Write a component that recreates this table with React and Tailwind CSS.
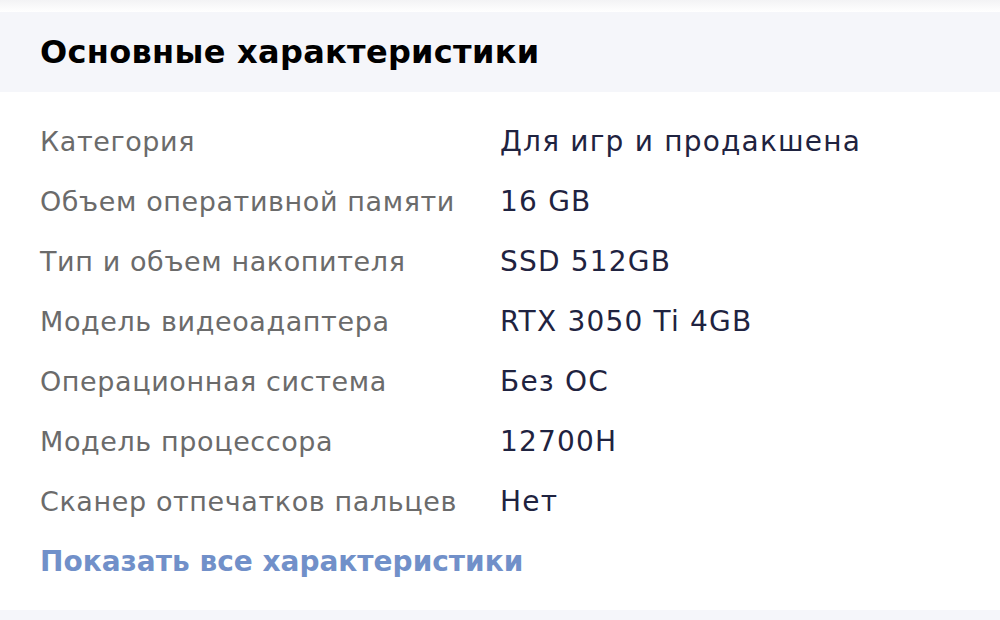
import React from "react";

const specs = [
  ["Категория", "Для игр и продакшена"],
  ["Объем оперативной памяти", "16 GB"],
  ["Тип и объем накопителя", "SSD 512GB"],
  ["Модель видеоадаптера", "RTX 3050 Ti 4GB"],
  ["Операционная система", "Без ОС"],
  ["Модель процессора", "12700H"],
  ["Сканер отпечатков пальцев", "Нет"],
];

const App = () => {
  return (
    <div className="w-[1000px] h-[620px] bg-white overflow-hidden font-['DejaVu_Sans',sans-serif]">
      <div className="h-[12px] bg-gradient-to-b from-[#f3f3f5] to-white" />
      <div className="h-[80px] bg-[#f5f6fa] flex items-center px-10">
        <h2 className="text-[32px] font-bold text-black tracking-[0.3px]">
          Основные характеристики
        </h2>
      </div>
      <div className="px-10 pt-[20px]">
        {specs.map((row, index) => {
          return (
            <div key={index} className="flex h-[60px] items-center">
              <div className="w-[460px] text-[27px] tracking-[0.6px] text-[#6b6b6b]">{row[0]}</div>
              <div className="text-[28px] tracking-[1.2px] text-[#1f2340]">{row[1]}</div>
            </div>
          );
        })}
        <div className="h-[60px] flex items-center text-[28px] font-bold text-[#7190c9]">
          Показать все характеристики
        </div>
      </div>
      <div className="mt-[18px] h-[10px] bg-[#f5f6fa]" />
    </div>
  );
};

export default App;
